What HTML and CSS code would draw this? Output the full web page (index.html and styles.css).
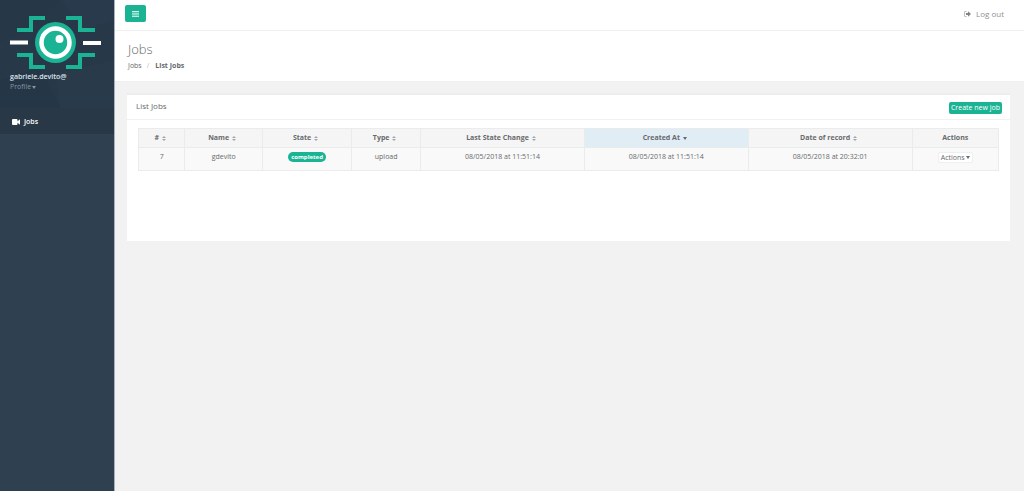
FILE: index.html
```html
<!DOCTYPE html>
<html lang="en">
<head>
<meta charset="utf-8">
<title>List Jobs</title>
<link rel="stylesheet" href="styles.css">
</head>
<body>
<div class="app">
  <aside class="sidebar">
    <div class="profile">
      <svg class="pattern" viewBox="0 0 114 108" preserveAspectRatio="none" aria-hidden="true">
        <path d="M0 0H60L30 30L0 42Z" fill="#263747"/>
        <path d="M60 0H114V20L84 30Z" fill="#283a4b"/>
        <path d="M0 80L40 68L60 108H0Z" fill="#253746"/>
        <path d="M55 74L114 60V108H60Z" fill="#293b4b"/>
      </svg>
      <svg class="logo" viewBox="0 0 92 54" role="img" aria-label="Logo">
        <g fill="none" stroke="#1ab394" stroke-width="4">
          <path d="M7 15H21V3H35"/>
          <path d="M56 3H70V15H85"/>
          <path d="M7 40H21V52H35"/>
          <path d="M56 52H70V40H85"/>
        </g>
        <path d="M0 25.500H18V29.500H0ZM73 26H91V30H73Z" fill="#fff"/>
        <circle cx="45.500" cy="27.500" r="20.500" fill="#1ab394"/>
        <circle cx="45.500" cy="27.500" r="14" fill="#1ab394" stroke="#fff" stroke-width="4.500"/>
        <circle cx="49.500" cy="24" r="4" fill="#fff"/>
      </svg>
      <strong class="user">gabriele.devito@</strong>
      <button class="profile-menu" type="button">Profile<span class="caret"></span></button>
    </div>
    <nav>
      <a class="nav-item" href="#">
        <svg class="camera" viewBox="0 0 8 6" aria-hidden="true"><rect width="5.500" height="6" rx="1" fill="#fff"/><path d="M4.500 3L8 .3V5.700Z" fill="#fff"/></svg>
        Jobs
      </a>
    </nav>
  </aside>
  <div class="content">
    <header class="topbar">
      <button class="toggle" type="button" aria-label="Toggle navigation">
        <svg viewBox="0 0 7 6" aria-hidden="true"><path d="M0 .5H7M0 2.200H7M0 3.900H7M0 5.600H7" stroke="#fff" stroke-width=".8"/></svg>
      </button>
      <a class="logout" href="#">
        <svg viewBox="0 0 7 6" aria-hidden="true"><path d="M2.500 .5H1Q.5 .5 .5 1V5Q.5 5.500 1 5.500H2.500" fill="none" stroke="#aaacae" stroke-width=".8"/><path d="M2 2H4V.3L7 3L4 5.700V4H2Z" fill="#808385"/></svg>
        Log out
      </a>
    </header>
    <section class="heading">
      <h1>Jobs</h1>
      <nav class="crumbs" aria-label="Breadcrumb"><a href="#">Jobs</a><span class="slash">/</span><strong>List Jobs</strong></nav>
    </section>
    <main>
      <section class="card">
        <div class="card-head">
          <h2>List Jobs</h2>
          <button class="create" type="button">Create new job</button>
        </div>
        <div class="card-body">
          <table>
            <colgroup><col class="c-id"><col class="c-name"><col class="c-state"><col class="c-type"><col class="c-date"><col class="c-date"><col class="c-date"><col class="c-act"></colgroup>
            <thead>
              <tr>
                <th>#<span class="sort"></span></th>
                <th>Name<span class="sort"></span></th>
                <th>State<span class="sort"></span></th>
                <th>Type<span class="sort"></span></th>
                <th>Last State Change<span class="sort"></span></th>
                <th class="sorted">Created At<span class="caret"></span></th>
                <th>Date of record<span class="sort"></span></th>
                <th>Actions</th>
              </tr>
            </thead>
            <tbody>
              <tr>
                <td>7</td>
                <td>gdevito</td>
                <td><span class="badge">completed</span></td>
                <td>upload</td>
                <td>08/05/2018 at 11:51:14</td>
                <td>08/05/2018 at 11:51:14</td>
                <td>08/05/2018 at 20:32:01</td>
                <td><button class="actions" type="button">Actions<span class="caret"></span></button></td>
              </tr>
            </tbody>
          </table>
        </div>
      </section>
    </main>
  </div>
</div>
</body>
</html>
```
FILE: styles.css
```css
* { box-sizing: border-box; }

body {
  margin: 0;
  background: #f2f2f2;
  color: #676a6c;
  font: 7px/10px "Open Sans", "Noto Sans", sans-serif;
}

a { color: inherit; text-decoration: none; }

button {
  margin: 0;
  padding: 0;
  border: 0;
  background: none;
  color: inherit;
  font: inherit;
  cursor: pointer;
}

.app { display: flex; min-height: 100vh; }

.sidebar {
  flex: 0 0 115px;
  border-right: 1px solid #a9b0b8;
  background: #2f4050;
}

.profile {
  display: flex;
  flex-direction: column;
  align-items: flex-start;
  position: relative;
  height: 108px;
  padding: 15px 10px 0;
  background: #273949;
}

.pattern { position: absolute; inset: 0; width: 100%; height: 100%; }
.logo { position: relative; width: 92px; height: 54px; }
.user { position: relative; margin-top: 3px; color: #dfe4ed; font-weight: 600; }
.profile-menu { position: relative; color: #8095a8; }

.nav-item {
  display: flex;
  align-items: center;
  gap: 4px;
  height: 26px;
  padding: 1px 12px 0;
  background: #293846;
  color: #fff;
  font-weight: 600;
}

.camera { width: 8px; height: 6px; }

.content { flex: 1; min-width: 0; }

.topbar {
  display: flex;
  align-items: center;
  justify-content: space-between;
  height: 31px;
  padding: 0 20px 3px 10px;
  border-bottom: 1px solid #f0f0f0;
  background: #fff;
}

.toggle {
  display: flex;
  align-items: center;
  justify-content: center;
  width: 21px;
  height: 17px;
  border-radius: 2px;
  background: #1ab394;
}

.toggle svg { width: 7px; height: 6px; }

.logout {
  display: flex;
  align-items: center;
  gap: 5px;
  color: #8e9193;
  font-size: 8px;
}

.logout svg { width: 7px; height: 6px; }

.heading {
  height: 51px;
  padding: 10px 13px 0;
  border-bottom: 1px solid #eeeff0;
  background: #fff;
}

h1 { margin: 0; font-size: 13px; line-height: 16px; font-weight: 300; }
.crumbs { margin-top: 4px; }
.slash { margin: 0 6px 0 5px; color: #bbb; }

main { padding: 11px 14px 20px 12px; }

.card {
  min-height: 148px;
  border-top: 2px solid #ebedee;
  background: #fff;
}

.card-head {
  display: flex;
  align-items: center;
  justify-content: space-between;
  height: 25px;
  padding: 0 8px 2px 9px;
  border-bottom: 1px solid #f0f1f2;
}

h2 { margin: 0; font-size: 8px; line-height: 10px; font-weight: 400; }

.create {
  height: 12px;
  margin-top: 3px;
  padding: 0 2px;
  border-radius: 2px;
  background: #1ab394;
  color: #fff;
}

.card-body { padding: 8px 11px 0; }

table {
  width: 100%;
  border-collapse: collapse;
  table-layout: fixed;
  text-align: center;
}

.c-id { width: 5.4%; }
.c-name { width: 9%; }
.c-state { width: 10.4%; }
.c-type { width: 8%; }
.c-date { width: 19.05%; }
.c-act { width: 10.05%; }

th, td { border: 1px solid #e9ebec; padding: 0; white-space: nowrap; }
th { height: 19px; background: #f5f5f6; font-weight: 700; }
td { height: 23px; padding-bottom: 4px; background: #f9f9f9; }
th.sorted { background: #e0edf5; }

.caret {
  display: inline-block;
  margin-left: 1px;
  border: 2px solid transparent;
  border-top: 3px solid currentColor;
  border-bottom: 0;
  vertical-align: middle;
}

th .caret, .sort { margin-left: 3px; }
th:has(.caret), th:has(.sort) { padding-right: 3px; }

.sort {
  display: inline-flex;
  flex-direction: column;
  gap: 1px;
  vertical-align: middle;
}

.sort::before, .sort::after {
  content: "";
  border: 2px solid transparent;
}

.sort::before { border-top: 0; border-bottom-color: #a4a6a8; }
.sort::after { border-bottom: 0; border-top-color: #a4a6a8; }

.badge {
  display: inline-block;
  padding: 0 3px;
  border-radius: 5px;
  background: #1ab394;
  color: #fff;
  font-size: 6px;
  font-weight: 700;
  line-height: 10px;
  vertical-align: middle;
}

.actions {
  height: 11px;
  padding: 0 2px;
  border: 1px solid #eeeff0;
  border-radius: 2px;
  background: #fff;
  line-height: 9px;
  vertical-align: middle;
}
```
